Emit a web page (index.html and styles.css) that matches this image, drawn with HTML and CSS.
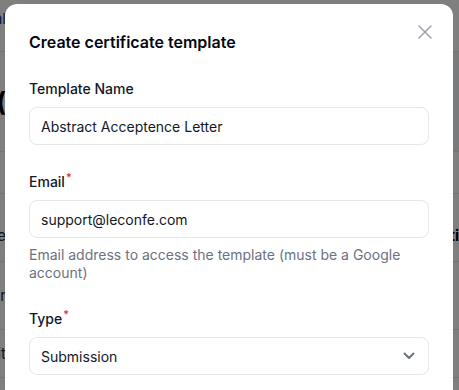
FILE: index.html
```html
<!DOCTYPE html>
<html lang="en">
<head>
    <meta charset="UTF-8">
    <meta name="viewport" content="width=device-width, initial-scale=1.0">
    <link rel="stylesheet" href="styles.css">
    <title>Certificates</title>
</head>
<body>

    <div class="page">
        <div class="page-header">
            <div class="edge"><span class="nav-link">Portal</span></div>
        </div>
        <div class="page-hero">
            <div class="edge"><span class="hero-title">Certificate (</span></div>
            <div class="hero-side"></div>
        </div>
        <div class="page-row row-head"></div>
        <div class="page-row row-tall">
            <div class="edge"><span class="cell-text">Template name</span></div>
            <div class="edge edge-right"><span class="cell-bold">Acti</span></div>
        </div>
        <div class="page-row row-tall row-center">
            <div class="edge"><span class="cell-text">Organizer</span></div>
        </div>
        <div class="page-row row-mid row-center">
            <div class="edge"><span class="cell-text">Submit</span></div>
        </div>
        <div class="page-row row-mid"></div>
    </div>

    <div class="overlay"></div>

    <div class="modal">
        <div class="modal-head">
            <h3>Create certificate template</h3>
            <button class="close-btn" type="button" aria-label="Close">
                <svg width="14" height="14" viewBox="0 0 14 14" fill="none" stroke="currentColor" stroke-width="1.5" stroke-linecap="round">
                    <path d="M1 1L13 13M13 1L1 13"/>
                </svg>
            </button>
        </div>

        <div class="field">
            <label for="template-name">Template Name</label>
            <input type="text" id="template-name" value="Abstract Acceptence Letter">
        </div>

        <div class="field">
            <label for="template-email">Email<sup class="req">*</sup></label>
            <input type="text" id="template-email" value="support@leconfe.com">
            <p class="help">Email address to access the template (must be a Google account)</p>
        </div>

        <div class="field">
            <label for="template-type">Type<sup class="req">*</sup></label>
            <div class="select-box">
                <span>Submission</span>
                <svg width="12" height="8" viewBox="0 0 12 8" fill="none" stroke="#6b7280" stroke-width="2" stroke-linecap="round" stroke-linejoin="round">
                    <path d="M1.5 1.5L6 6L10.5 1.5"/>
                </svg>
            </div>
        </div>
    </div>

</body>
</html>
```

FILE: styles.css
```css
body {
    margin: 0;
    font-family: 'Inter', 'Noto Sans', sans-serif;
    color: #111827;
    background-color: #fff;
    overflow: hidden;
}

/* page behind the dialog */
.page {
    width: 459px;
}

.page-header {
    height: 52px;
    border-bottom: 1px solid #e5e7eb;
    display: flex;
    align-items: flex-start;
    box-sizing: border-box;
}

.page-header .edge {
    margin-top: 9px;
}

.page-hero {
    height: 99px;
    border-bottom: 1px solid #e5e7eb;
    display: flex;
    align-items: center;
    justify-content: space-between;
}

.hero-side {
    width: 8px;
    height: 100%;
    background-color: #f3f4f6;
}

.page-row {
    border-bottom: 1px solid #e5e7eb;
    display: flex;
    align-items: flex-end;
    justify-content: space-between;
    box-sizing: border-box;
    padding-bottom: 16px;
}

.row-center {
    align-items: center;
    padding-bottom: 0;
}

.row-head {
    height: 42px;
}

.row-tall {
    height: 68px;
}

.row-mid {
    height: 48px;
}

.edge {
    width: 6px;
    display: flex;
    justify-content: flex-end;
    white-space: nowrap;
}

.nav-link {
    font-size: 15px;
    color: #1e3a8a;
}

.hero-title {
    font-size: 26px;
    font-weight: 700;
    color: #000;
}

.cell-text {
    font-size: 15px;
    color: #1e293b;
}

.cell-bold {
    font-size: 15px;
    font-weight: 700;
    color: #000;
}

.overlay {
    position: fixed;
    inset: 0;
    background-color: rgba(0, 0, 0, 0.5);
}

/* dialog */
.modal {
    position: fixed;
    top: 4px;
    left: 5px;
    width: 448px;
    box-sizing: border-box;
    padding: 24px;
    background-color: #fff;
    border-radius: 12px;
}

.modal-head {
    display: flex;
    justify-content: space-between;
    align-items: flex-start;
    margin-bottom: 23px;
}

.modal-head h3 {
    margin: 0;
    font-size: 16px;
    line-height: 28px;
    font-weight: 600;
    color: #030712;
}

.close-btn {
    border: none;
    background: none;
    padding: 0;
    margin-top: -3px;
    margin-right: -3px;
    color: #9ca3af;
    cursor: pointer;
    display: flex;
}

.field {
    margin-bottom: 27px;
}

.field label {
    display: block;
    font-size: 14px;
    line-height: 20px;
    font-weight: 500;
    color: #111827;
    margin-bottom: 8px;
}

.req {
    color: #dc2626;
    font-size: 11px;
    line-height: 0;
    margin-left: 1px;
}

.field input,
.select-box {
    width: 100%;
    height: 38px;
    box-sizing: border-box;
    border: 1px solid #e5e7eb;
    border-radius: 8px;
    padding: 0 11px;
    font-family: inherit;
    font-size: 14px;
    color: #111827;
    background-color: #fff;
    outline: none;
}

.select-box {
    display: flex;
    align-items: center;
    justify-content: space-between;
    padding-right: 13px;
}

.help {
    margin: 8px 0 0;
    font-size: 14px;
    line-height: 18px;
    color: #6b7280;
}
```
